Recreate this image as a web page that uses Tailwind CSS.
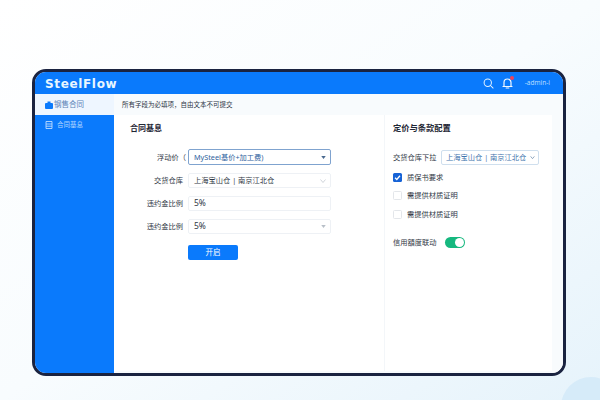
<!DOCTYPE html>
<html lang="zh-CN">
<head>
    <meta charset="UTF-8">
    <title>SteelFlow</title>
    <script src="https://cdn.jsdelivr.net/npm/@tailwindcss/browser@4"></script>
</head>
<body>
<div class="w-[600px] h-[400px] overflow-hidden relative bg-gradient-to-br from-[#ffffff] via-[#f8fcfe] to-[#e6f3fb] font-['Noto_Sans','Noto_Sans_CJK_SC',sans-serif] text-[7.25px] text-[#2f3745]">
    <!-- corner blob -->
    <div class="absolute left-[561px] top-[377px] w-[60px] h-[60px] rounded-full bg-[#d6ebf9]"></div>

    <!-- Window -->
    <div class="absolute left-[32px] top-[69px] w-[534px] h-[307px] border-[3px] border-[#1a2340] rounded-[14px] overflow-hidden bg-white flex flex-col">
        <!-- Header -->
        <div class="h-[22px] shrink-0 bg-[#0a7afc] flex items-center pl-[10px] pr-[13px]">
            <span class="pt-[1px] font-['DejaVu_Sans',sans-serif] font-bold text-[12px] text-[#e8f6ff] tracking-[0.65px]">SteelFlow</span>
            <div class="ml-auto flex items-center">
                <svg class="w-[11px] h-[11px]" viewBox="0 0 12 12" fill="none" stroke="#e6f3ff" stroke-width="1.1"><circle cx="5.2" cy="5.2" r="4"/><path d="M8.2 8.2L11 11" stroke-linecap="round"/></svg>
                <div class="relative ml-[8px] w-[11px] h-[12px]">
                    <svg class="w-[11px] h-[12px]" viewBox="0 0 11 12" fill="none" stroke="#f2f8ff" stroke-width="1.2"><path d="M2 9V5.5a3.5 3.5 0 0 1 7 0V9"/><path d="M1 9.5h9M4.2 11h2.6" stroke-linecap="round"/></svg>
                    <span class="absolute right-[-1px] top-[-1px] w-[4px] h-[4px] rounded-full bg-[#f0415a]"></span>
                </div>
                <span class="ml-[12px] text-[6.5px] text-[#b9dcff]">-admin-i</span>
            </div>
        </div>

        <div class="flex flex-1 min-h-0">
            <!-- Sidebar -->
            <div class="w-[79px] shrink-0 bg-[#0a7afc] text-[7px]">
                <div class="h-[21px] bg-[#eef6ff] flex items-center pl-[10px] text-[#5b84b8] text-[7.5px]">
                    <svg class="w-[8px] h-[8px] mr-[1px]" viewBox="0 0 8 8"><path d="M1 2h6a1 1 0 0 1 1 1v4a1 1 0 0 1-1 1H1a1 1 0 0 1-1-1V3a1 1 0 0 1 1-1zM2.5 .5h3v2h-3z" fill="#0a7afc"/></svg>
                    钢售合同
                </div>
                <div class="h-[19px] flex items-center pl-[10px] text-[#b5d8ff] text-[6.5px]">
                    <svg class="w-[8px] h-[8px] mr-[4px]" viewBox="0 0 8 8" fill="none" stroke="#cfe6ff" stroke-width="0.8"><path d="M1 .5h6v7H1zM1 3h6M1 5.2h6"/></svg>
                    合同基息
                </div>
            </div>

            <!-- Main -->
            <div class="flex-1 min-w-0 flex flex-col bg-[#f8fbfd]">
                <div class="h-[21px] shrink-0 flex items-center pl-[8px] text-[6.5px] text-[#2d3646]">所有字段为必填项，自由文本不可提交</div>

                <div class="flex-1 flex pr-[11px] pb-[2px]">
                    <!-- Contract info -->
                    <div class="w-[270px] bg-white pl-[16px] pt-[6px]">
                        <div class="text-[8px] font-bold text-[#1f2735] leading-[13px]">合同基息</div>

                        <div class="mt-[15px] flex flex-col gap-[8px] w-[201px]">
                            <div class="flex items-center h-[16px]">
                                <label class="w-[58px] shrink-0 text-right pr-[2px]">浮动价（</label>
                                <div class="flex-1 h-[16px] border border-[#7fa3cf] rounded-[2px] flex items-center pl-[5px] pr-[4px] text-[#2f5f9e]">
                                    MySteel基价+加工费)
                                    <svg class="ml-auto w-[5px] h-[3px]" viewBox="0 0 6 4"><path d="M0 0h6L3 4z" fill="#4a6a90"/></svg>
                                </div>
                            </div>
                            <div class="flex items-center h-[15px]">
                                <label class="w-[58px] shrink-0 text-right pr-[5px]">交货仓库</label>
                                <div class="flex-1 h-[15px] border border-[#eef1f5] rounded-[2px] flex items-center pl-[5px] pr-[4px]">
                                    上海宝山仓 | 南京江北仓
                                    <svg class="ml-auto w-[6px] h-[4px]" viewBox="0 0 6 4" fill="none" stroke="#c4cad2" stroke-width="0.8"><path d="M.5.5L3 3.5 5.5.5"/></svg>
                                </div>
                            </div>
                            <div class="flex items-center h-[15px]">
                                <label class="w-[58px] shrink-0 text-right pr-[5px]">违约金比例</label>
                                <div class="flex-1 h-[15px] border border-[#eef1f5] rounded-[2px] flex items-center pl-[5px] text-[8.5px]">5%</div>
                            </div>
                            <div class="flex items-center h-[15px]">
                                <label class="w-[58px] shrink-0 text-right pr-[5px]">违约金比例</label>
                                <div class="flex-1 h-[15px] border border-[#eef1f5] rounded-[2px] flex items-center pl-[5px] pr-[4px] text-[8.5px]">
                                    5%
                                    <svg class="ml-auto w-[5px] h-[3px]" viewBox="0 0 6 4"><path d="M0 0h6L3 4z" fill="#b8bfc8"/></svg>
                                </div>
                            </div>
                        </div>

                        <button class="mt-[11px] ml-[58px] w-[50px] h-[15px] bg-[#0a7afc] rounded-[2px] text-white text-[7.5px] flex items-center justify-center">开启</button>
                    </div>

                    <!-- Pricing panel -->
                    <div class="flex-1 min-w-0 bg-white border-l border-[#f3f6f9] pl-[8px] pt-[6px]">
                        <div class="text-[8.25px] font-bold text-[#1f2735] leading-[13px]">定价与条款配置</div>

                        <div class="mt-[15px] flex items-center h-[16px]">
                            <span class="w-[48px] shrink-0">交货仓库下拉</span>
                            <div class="w-[98px] h-[15px] border border-[#cfdfee] rounded-[2px] flex items-center pl-[4px] pr-[3px] text-[#3f74ad] whitespace-nowrap">
                                上海宝山仓 | 南京江北仓
                                <svg class="ml-auto w-[5px] h-[3px]" viewBox="0 0 6 4" fill="none" stroke="#6f8cab" stroke-width="1"><path d="M.5.5L3 3.5 5.5.5"/></svg>
                            </div>
                        </div>

                        <div class="mt-[7px] flex flex-col gap-[8.5px]">
                            <div class="flex items-center h-[10px]">
                                <span class="w-[9px] h-[9px] rounded-[1.5px] bg-[#1763d6] flex items-center justify-center">
                                    <svg class="w-[7px] h-[7px]" viewBox="0 0 8 8" fill="none" stroke="#fff" stroke-width="1.5"><path d="M1.2 4.2l2 2 3.6-4.2"/></svg>
                                </span>
                                <span class="ml-[5px]">质保书要求</span>
                            </div>
                            <div class="flex items-center h-[10px]">
                                <span class="w-[9px] h-[9px] rounded-[1.5px] border border-[#e3e6ea] bg-white"></span>
                                <span class="ml-[5px]">需提供材质证明</span>
                            </div>
                            <div class="flex items-center h-[10px]">
                                <span class="w-[9px] h-[9px] rounded-[1.5px] border border-[#e3e6ea] bg-white"></span>
                                <span class="ml-[5px]">需提供材质证明</span>
                            </div>
                        </div>

                        <div class="mt-[17px] flex items-center h-[12px]">
                            <span class="w-[52px] shrink-0">信用額度联动</span>
                            <span class="w-[20px] h-[11px] rounded-full bg-[#16b87f] flex items-center justify-end pr-[1px]">
                                <span class="w-[9px] h-[9px] rounded-full bg-white"></span>
                            </span>
                        </div>
                    </div>
                </div>
            </div>
        </div>
    </div>
</div>
</body>
</html>
